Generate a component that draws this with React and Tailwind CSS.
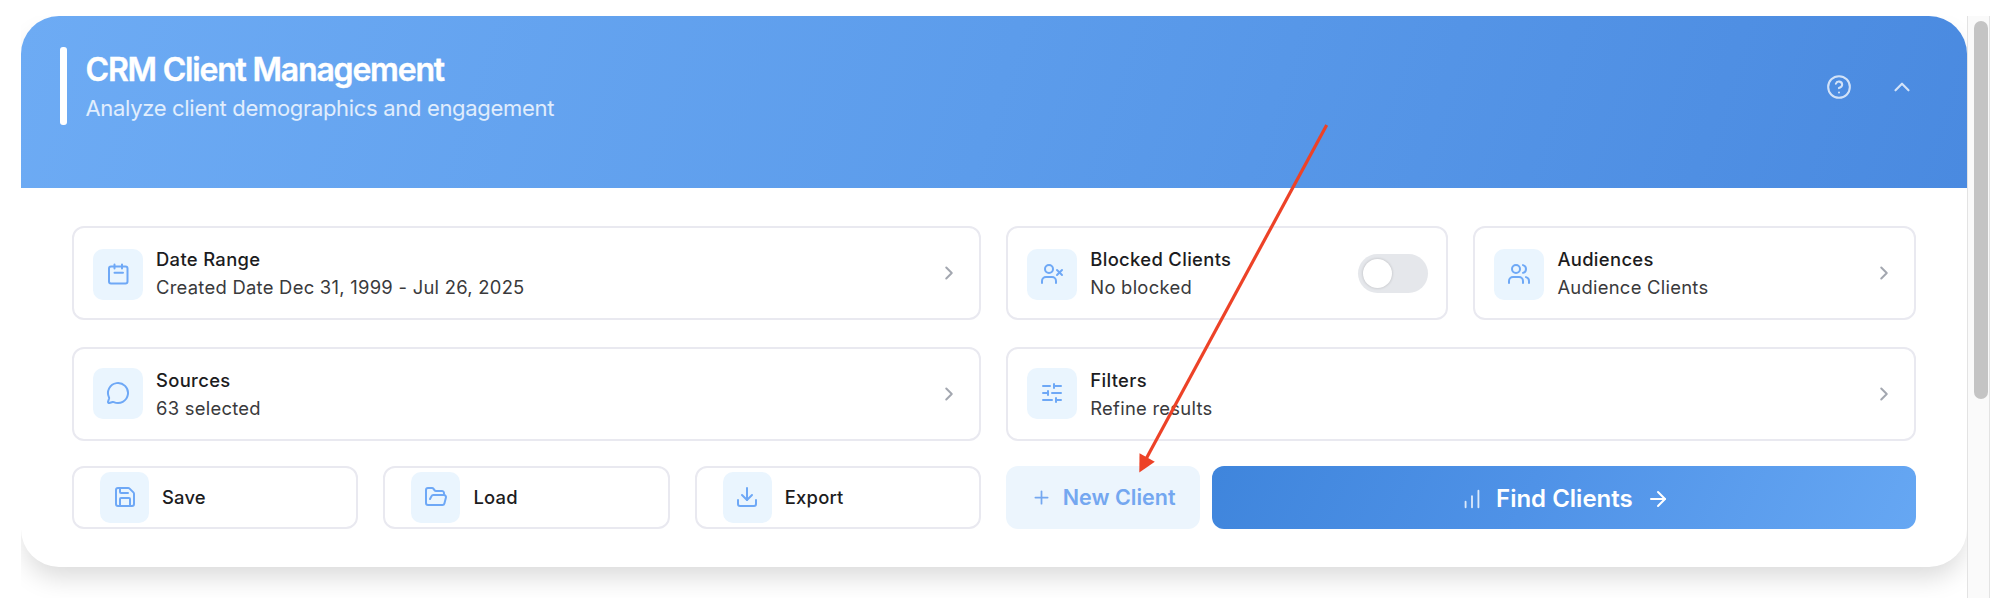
import React from 'react';
import {
  ArrowRight, ChartNoAxesColumnIncreasing, ChevronRight, ChevronUp, CircleHelp, Download,
  FolderOpen, MessageCircle, Plus, Save, SlidersHorizontal, UserX, Users,
} from 'lucide-react';

function CalendarIcon({ size, ...props }) {
  return (
    <svg width={size} height={size} viewBox="0 0 24 24" fill="none" stroke="currentColor" strokeLinecap="round" strokeLinejoin="round" {...props}>
      <rect x="3" y="4.5" width="18.5" height="17" rx="2" />
      <path d="M8.5 2.5v4M16 2.5v4M8.5 10.8h8.5" />
    </svg>
  );
}

function Tile({ icon: Icon, className = '' }) {
  return (
    <div className={`flex h-[50.5px] shrink-0 items-center justify-center rounded-[10px] bg-[#eaf5fe] text-[#6ea8f6] ${className}`}>
      <Icon size={24} strokeWidth={2} />
    </div>
  );
}

function Card({ icon, title, text, children, className = '', tile = 'mt-[21px]' }) {
  return (
    <div className={`flex h-[94px] rounded-xl border-2 border-[#e9e9f0] bg-white pl-[19px] pr-[19px] ${className}`}>
      <Tile icon={icon} className={`w-[50px] ${tile}`} />
      <div className="ml-[13px] mt-[17px] flex-1 text-[18.4px] leading-7">
        <div className="font-medium tracking-[0.34px] text-[#1c1c1e]">{title}</div>
        <div className="tracking-[0.27px] text-[#3a3a3c]">{text}</div>
      </div>
      <div className="flex items-center">{children ?? <ChevronRight size={22} strokeWidth={2.2} className="text-[#a3a7b0]" />}</div>
    </div>
  );
}

function ActionButton({ icon, children }) {
  return (
    <button className="flex h-[62.5px] items-center rounded-xl border-2 border-[#e9e9f0] bg-white pl-[26px] text-[18.4px] font-medium tracking-[0.2px] text-[#1c1c1e]">
      <Tile icon={icon} className="w-[49px]" />
      <span className="ml-[13px] pt-px">{children}</span>
    </button>
  );
}

export default function App() {
  return (
    <div className="relative flex h-[598px] w-[1990px] overflow-hidden bg-white pt-4 font-['Inter',sans-serif]">
      <main className="ml-[21px] h-full w-[1946px] overflow-hidden">
        <section className="h-[551px] w-[1945.5px] overflow-hidden rounded-[38px] bg-white shadow-[0_14px_26px_-4px_rgba(0,0,0,0.15)]">
          <header className="flex h-[172px] bg-linear-[108deg,#6dabf4_0%,#5c9ceb_50%,#4a8ae0_100%] pl-[38.5px] pr-[52px] pt-[31px] text-white">
            <div className="h-[78px] w-[7.5px] rounded-[3px] bg-white" />
            <div className="ml-[18.5px] flex-1">
              <h1 className="mt-[3px] text-[32px] font-semibold leading-10 tracking-[-1.2px] [-webkit-text-stroke:0.4px_white]">CRM Client Management</h1>
              <p className="text-[22px] leading-9 tracking-[-0.32px] text-white/80">Analyze client demographics and engagement</p>
            </div>
            <div className="flex h-[79px] items-center gap-[37px] text-white/75">
              <CircleHelp size={26} strokeWidth={1.9} />
              <ChevronUp size={26} strokeWidth={2} />
            </div>
          </header>
          <div className="grid grid-cols-2 gap-x-[25px] px-[51px] pt-[38px]">
            <Card icon={CalendarIcon} title="Date Range" text="Created Date Dec 31, 1999 - Jul 26, 2025" />
            <div className="grid grid-cols-2 gap-[25px]">
              <Card icon={UserX} title="Blocked Clients" text="No blocked">
                <div className="-mr-px flex h-[39px] w-[70px] items-center rounded-full bg-[#e5e7eb] pl-[5px]">
                  <div className="size-[29px] rounded-full bg-white shadow-[0_0_3px_rgba(0,0,0,0.2)]" />
                </div>
              </Card>
              <Card icon={Users} title="Audiences" text="Audience Clients" />
            </div>
            <Card icon={MessageCircle} title="Sources" text="63 selected" className="mt-[27px]" tile="mt-[19px]" />
            <Card icon={SlidersHorizontal} title="Filters" text="Refine results" className="mt-[27px]" tile="mt-[19px]" />
            <div className="mt-[25px] grid grid-cols-3 gap-[25px]">
              <ActionButton icon={Save}>Save</ActionButton>
              <ActionButton icon={FolderOpen}>Load</ActionButton>
              <ActionButton icon={Download}>Export</ActionButton>
            </div>
            <div className="mt-[25px] flex gap-3">
              <button className="flex h-[62.5px] w-[194px] items-center rounded-xl bg-[#ecf5fd] pl-[25px] text-[21.5px] font-semibold text-[#74a7f0]">
                <Plus size={21} strokeWidth={2} />
                <span className="ml-[10.5px] pb-px">New Client</span>
              </button>
              <button className="flex h-[62.5px] flex-1 items-center justify-center rounded-xl bg-linear-[115deg,#3f85dc_0%,#4f92e7_45%,#66a7f3_100%] pl-[3px] pt-[3px] text-[24px] font-semibold text-white">
                <ChartNoAxesColumnIncreasing size={22} strokeWidth={2} className="text-white/80" />
                <span className="ml-[13px] mr-[13px]">Find Clients</span>
                <ArrowRight size={24} strokeWidth={2} />
              </button>
            </div>
          </div>
        </section>
      </main>
      <aside className="h-full w-[23px] border-l border-r border-[#e3e3e3] bg-[#fafafa] pl-[6px] pt-[5px]">
        <div className="h-[378px] w-[13.5px] rounded-full bg-[#c4c4c4]" />
      </aside>
      <svg className="pointer-events-none absolute left-0 top-0" width="1990" height="598" viewBox="0 0 1990 598">
        <path d="M1326.7 125L1146 459" stroke="#ed4227" strokeWidth="3.2" />
        <path d="M1139.5 453.3L1154.8 461.8L1139.3 472.4Z" fill="#ed4227" />
      </svg>
    </div>
  );
}
